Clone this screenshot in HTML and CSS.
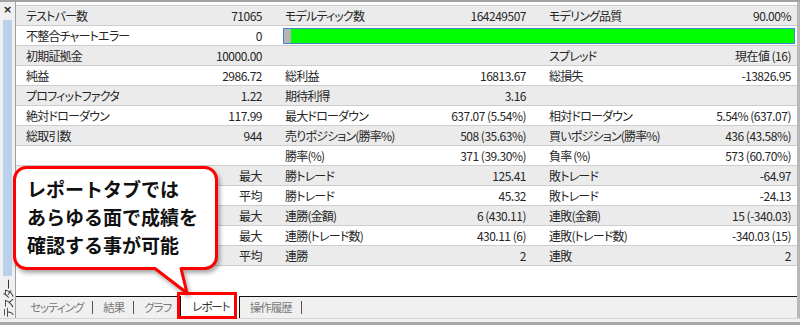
FILE: index.html
```html
<!DOCTYPE html>
<html lang="ja">
<head>
<meta charset="utf-8">
<link rel="stylesheet" href="styles.css">
</head>
<body>
<div class="window">
  <div class="main">
    <aside class="side">
      <span class="close">×</span>
      <div class="side-bar"></div>
      <div class="side-title"><span>テスター</span></div>
    </aside>
    <section class="content">
      <div class="report">
        <div class="row alt">
          <div class="cell"><span>テストバー数</span><span>71065</span></div>
          <div class="cell"><span>モデルティック数</span><span>164249507</span></div>
          <div class="cell"><span>モデリング品質</span><span>90.00%</span></div>
        </div>
        <div class="row">
          <div class="cell"><span>不整合チャートエラー</span><span>0</span></div>
          <div class="bar-cell"><div class="bar"><div class="bar-done"></div></div></div>
        </div>
        <div class="row alt">
          <div class="cell"><span>初期証拠金</span><span>10000.00</span></div>
          <div class="cell"><span></span><span></span></div>
          <div class="cell"><span>スプレッド</span><span>現在値 (16)</span></div>
        </div>
        <div class="row">
          <div class="cell"><span>純益</span><span>2986.72</span></div>
          <div class="cell"><span>総利益</span><span>16813.67</span></div>
          <div class="cell"><span>総損失</span><span>-13826.95</span></div>
        </div>
        <div class="row alt">
          <div class="cell"><span>プロフィットファクタ</span><span>1.22</span></div>
          <div class="cell"><span>期待利得</span><span>3.16</span></div>
          <div class="cell"><span></span><span></span></div>
        </div>
        <div class="row">
          <div class="cell"><span>絶対ドローダウン</span><span>117.99</span></div>
          <div class="cell"><span>最大ドローダウン</span><span>637.07 (5.54%)</span></div>
          <div class="cell"><span>相対ドローダウン</span><span>5.54% (637.07)</span></div>
        </div>
        <div class="row alt">
          <div class="cell"><span>総取引数</span><span>944</span></div>
          <div class="cell"><span>売りポジション(勝率%)</span><span>508 (35.63%)</span></div>
          <div class="cell"><span>買いポジション(勝率%)</span><span>436 (43.58%)</span></div>
        </div>
        <div class="row">
          <div class="cell"><span></span><span></span></div>
          <div class="cell"><span>勝率(%)</span><span>371 (39.30%)</span></div>
          <div class="cell"><span>負率 (%)</span><span>573 (60.70%)</span></div>
        </div>
        <div class="row alt">
          <div class="cell"><span></span><span>最大</span></div>
          <div class="cell"><span>勝トレード</span><span>125.41</span></div>
          <div class="cell"><span>敗トレード</span><span>-64.97</span></div>
        </div>
        <div class="row">
          <div class="cell"><span></span><span>平均</span></div>
          <div class="cell"><span>勝トレード</span><span>45.32</span></div>
          <div class="cell"><span>敗トレード</span><span>-24.13</span></div>
        </div>
        <div class="row alt">
          <div class="cell"><span></span><span>最大</span></div>
          <div class="cell"><span>連勝(金額)</span><span>6 (430.11)</span></div>
          <div class="cell"><span>連敗(金額)</span><span>15 (-340.03)</span></div>
        </div>
        <div class="row">
          <div class="cell"><span></span><span>最大</span></div>
          <div class="cell"><span>連勝(トレード数)</span><span>430.11 (6)</span></div>
          <div class="cell"><span>連敗(トレード数)</span><span>-340.03 (15)</span></div>
        </div>
        <div class="row alt">
          <div class="cell"><span></span><span>平均</span></div>
          <div class="cell"><span>連勝</span><span>2</span></div>
          <div class="cell"><span>連敗</span><span>2</span></div>
        </div>
      </div>
      <div class="filler"></div>
      <nav class="tabs">
        <span class="tab">セッティング</span><span class="sep"></span>
        <span class="tab">結果</span><span class="sep"></span>
        <span class="tab">グラフ</span>
        <span class="tab active">レポート</span>
        <span class="tab">操作履歴</span><span class="sep"></span>
      </nav>
    </section>
  </div>
  <div class="bottom"></div>
</div>

<svg class="callout-shape" width="240" height="300" viewBox="0 0 240 300">
  <path d="M26.5 167.5 H204.5 A12 12 0 0 1 216.5 179.5 V256.5 A12 12 0 0 1 204.5 268.5 H181 L187 293 L155 268.5 H26.5 A12 12 0 0 1 14.5 256.5 V179.5 A12 12 0 0 1 26.5 167.5 Z" fill="#fff" stroke="#ff0000" stroke-width="3" stroke-linejoin="round"/>
</svg>
<div class="callout-text">レポートタブでは<br>あらゆる面で成績を<br>確認する事が可能</div>
<div class="tab-highlight"></div>
</body>
</html>
```

FILE: styles.css
```css
html, body {
  margin: 0;
  padding: 0;
}
body {
  position: relative;
  width: 800px;
  height: 325px;
  overflow: hidden;
  background: #f0f0f0;
  font-family: "Noto Sans CJK JP", "Noto Sans", sans-serif;
  font-size: 12px;
  font-feature-settings: "palt";
  color: #262626;
}
.window {
  height: 325px;
  box-sizing: border-box;
  border-top: 2px solid #a3a3a3;
  display: flex;
  flex-direction: column;
}
.main {
  flex: 1;
  display: flex;
  min-height: 0;
}
.side {
  width: 15px;
  border-right: 1px solid #a0a0a0;
  display: flex;
  flex-direction: column;
  align-items: center;
  background: #f0f0f0;
}
.close {
  height: 16px;
  line-height: 16px;
  font-family: "DejaVu Sans", sans-serif;
  font-weight: bold;
  font-size: 11px;
  color: #222;
}
.side-bar {
  flex: 1;
  width: 9px;
  margin-top: 2px;
  margin-bottom: 2px;
  background: #b9d1ea;
}
.side-title {
  height: 40px;
  width: 12px;
  display: flex;
  align-items: center;
  justify-content: center;
  font-size: 11px;
  letter-spacing: -0.5px;
  color: #333;
}
.side-title span {
  writing-mode: vertical-rl;
  text-orientation: sideways;
  transform: rotate(180deg);
  white-space: nowrap;
  line-height: 12px;
}
.content {
  flex: 1;
  display: flex;
  flex-direction: column;
  background: #fff;
  border-right: 3px solid #b8b8b8;
}
.report {
  margin-top: 3px;
  border-top: 1px solid #cdcdcd;
}
.row {
  display: grid;
  grid-template-columns: 259px 264px 1fr;
  height: 19px;
  border-bottom: 1px solid #cdcdcd;
}
.row.alt {
  background: #ebebeb;
}
.cell {
  display: flex;
  justify-content: space-between;
  align-items: center;
  padding: 0 13px 0 10px;
  white-space: nowrap;
  line-height: 19px;
}
.cell span:first-child {
  letter-spacing: -0.8px;
}
.cell span:last-child {
  letter-spacing: -0.5px;
}
.cell:last-child {
  padding-right: 6px;
}
.bar-cell {
  grid-column: 2 / 4;
  display: flex;
  align-items: center;
  padding: 0 2px 0 8px;
}
.bar {
  flex: 1;
  height: 14px;
  border: 1px solid #3f86c8;
  background: #00ff00;
  display: flex;
}
.bar-done {
  width: 7px;
  background: #b4b4b4;
}
.filler {
  flex: 1;
}
.tabs {
  height: 21px;
  border-top: 1px solid #111;
  background: #f0f0f0;
  display: flex;
  align-items: center;
  padding-left: 4px;
  font-size: 11.5px;
  letter-spacing: -1px;
}
.tab {
  padding: 0 9px 0 10px;
  color: #7a7a7a;
  line-height: 21px;
  white-space: nowrap;
}
.tab.active {
  align-self: stretch;
  margin-top: -1px;
  height: 22px;
  padding: 0 9px 0 11px;
  background: #fff;
  color: #333;
  border-left: 1px solid #111;
  border-right: 1px solid #111;
}
.sep {
  width: 1px;
  height: 13px;
  background: #555;
}
.bottom {
  height: 7px;
  box-sizing: border-box;
  border-top: 1px solid #d4d4d4;
  border-bottom: 3px solid #a8a8a8;
  background: #f0f0f0;
}
.callout-shape {
  position: absolute;
  left: 0;
  top: 0;
  filter: drop-shadow(2px 3px 2px rgba(0, 0, 0, 0.35));
}
.callout-text {
  position: absolute;
  left: 27px;
  top: 175px;
  font-size: 19px;
  font-weight: 700;
  line-height: 28px;
  font-feature-settings: normal;
  color: #111;
  white-space: nowrap;
}
.tab-highlight {
  position: absolute;
  left: 177px;
  top: 292px;
  width: 60px;
  height: 27px;
  box-sizing: border-box;
  border: 3px solid #ff0000;
}
```
